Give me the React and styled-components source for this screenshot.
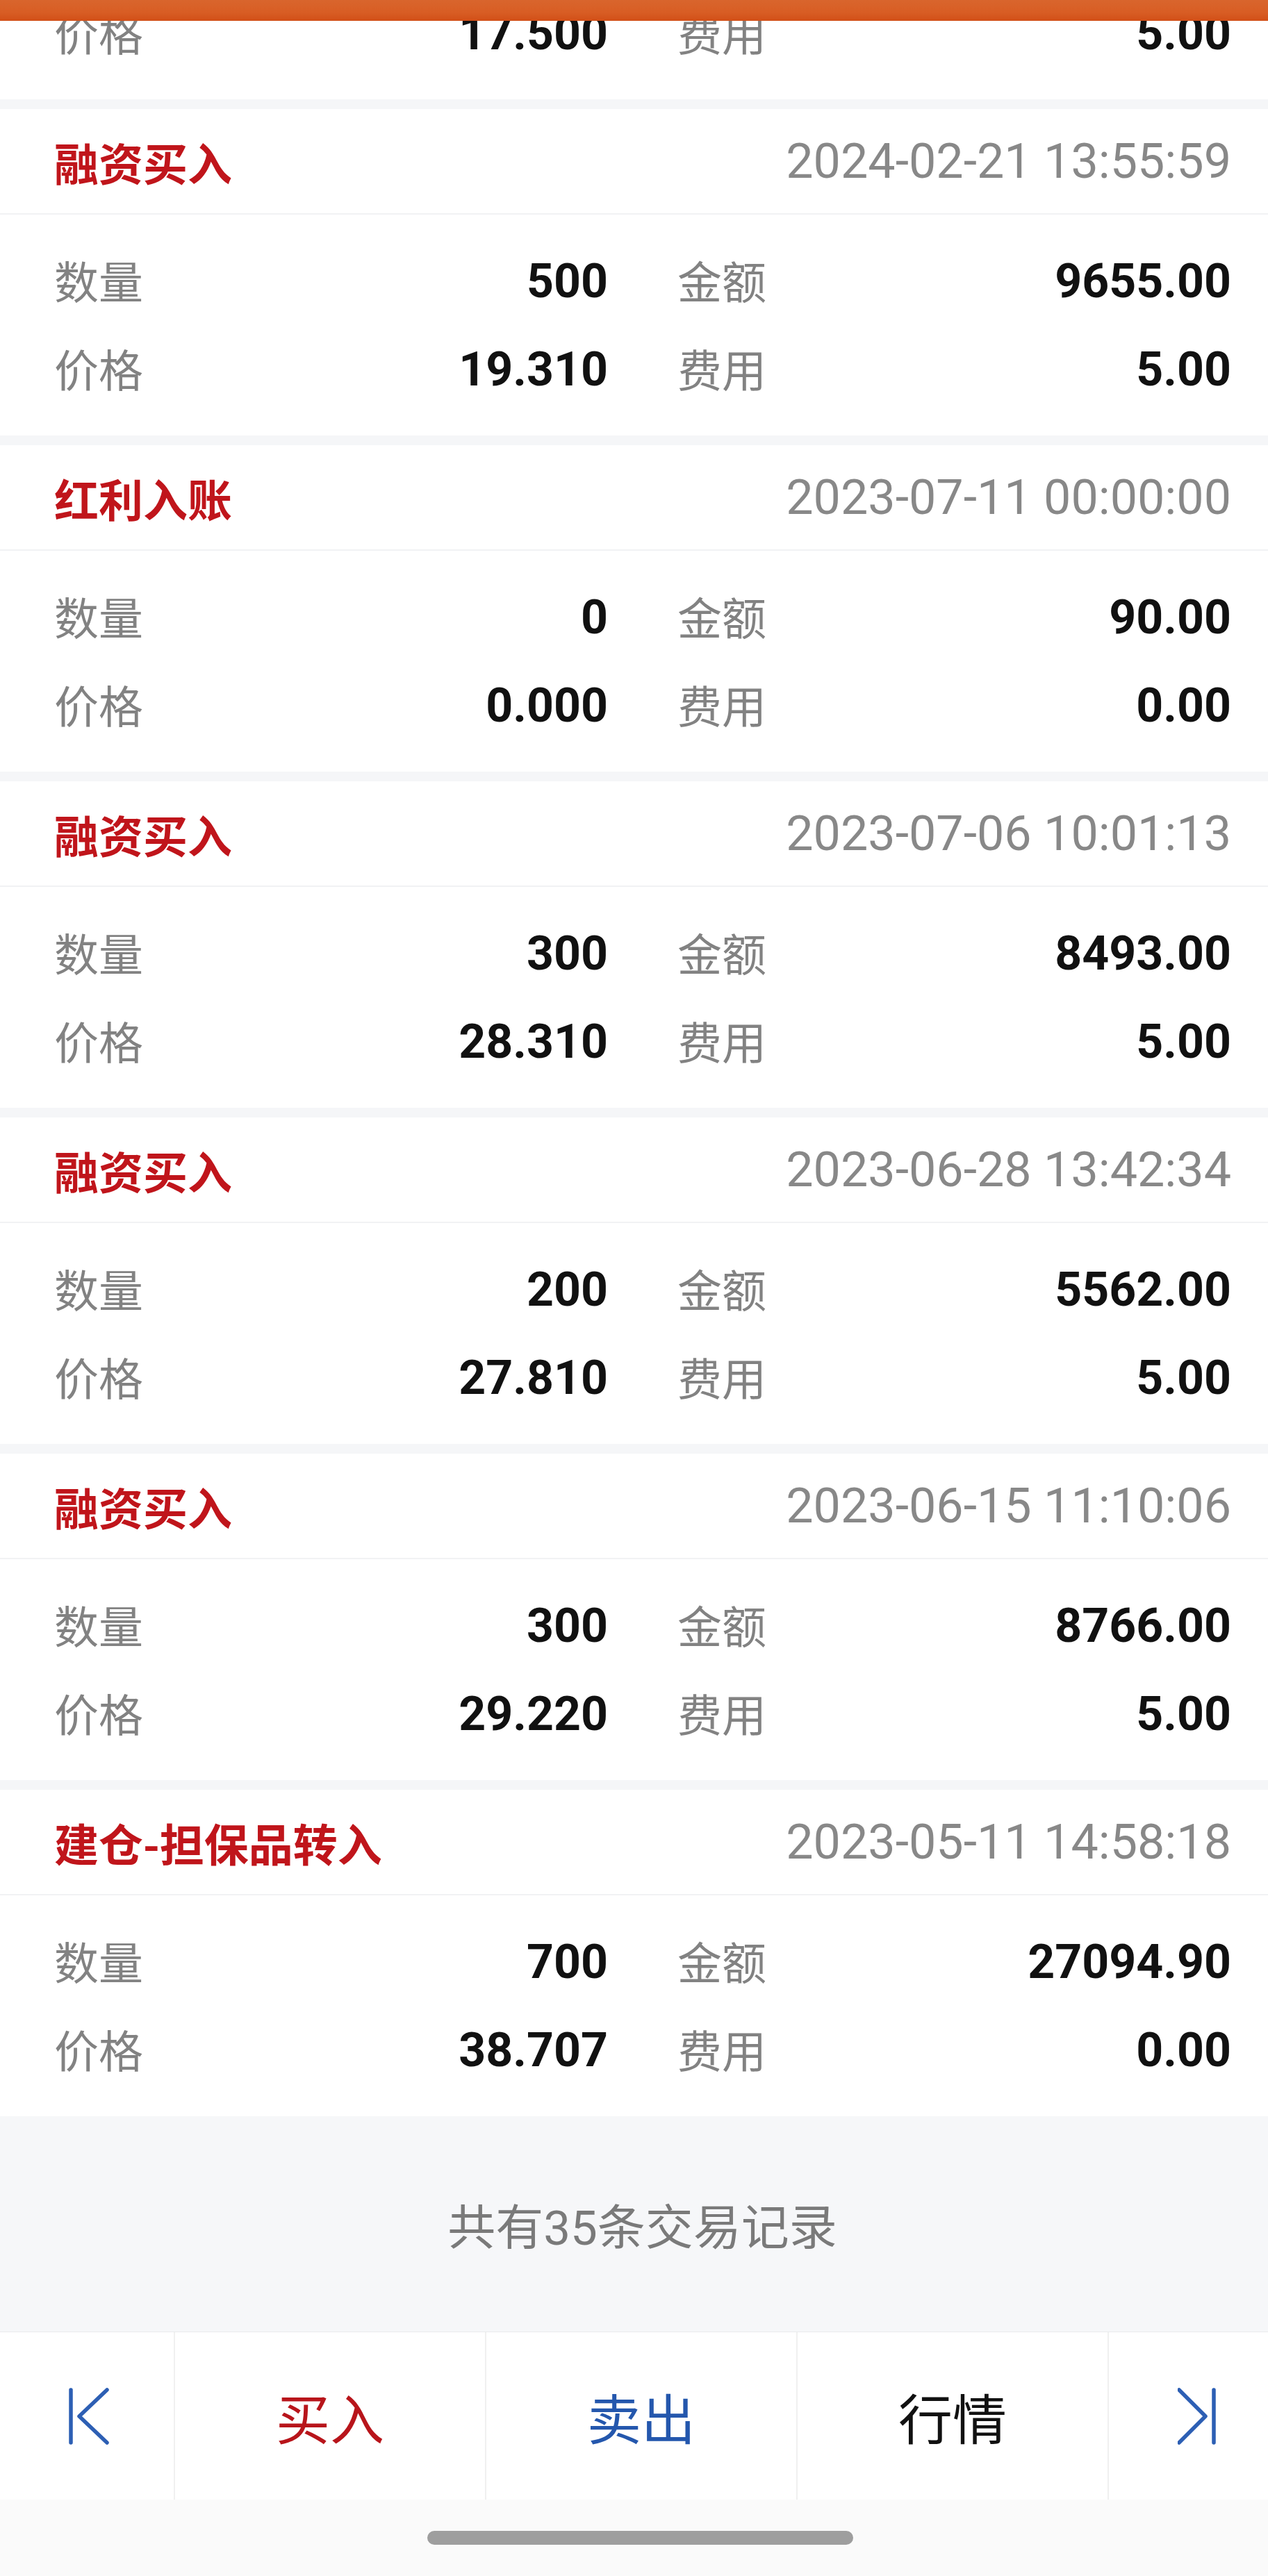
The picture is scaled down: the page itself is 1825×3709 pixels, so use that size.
import React from 'react';
import styled, { createGlobalStyle } from 'styled-components';

const GlobalStyle = createGlobalStyle`
  html, body {
    margin: 0;
    padding: 0;
    background: #ffffff;
    font-family: Roboto, "Noto Sans CJK SC", sans-serif;
  }
  * { box-sizing: border-box; }
`;

const records = [
  { title: '融资买入', time: '2024-02-21 13:55:59', qty: '500', amount: '9655.00', price: '19.310', fee: '5.00' },
  { title: '红利入账', time: '2023-07-11 00:00:00', qty: '0', amount: '90.00', price: '0.000', fee: '0.00' },
  { title: '融资买入', time: '2023-07-06 10:01:13', qty: '300', amount: '8493.00', price: '28.310', fee: '5.00' },
  { title: '融资买入', time: '2023-06-28 13:42:34', qty: '200', amount: '5562.00', price: '27.810', fee: '5.00' },
  { title: '融资买入', time: '2023-06-15 11:10:06', qty: '300', amount: '8766.00', price: '29.220', fee: '5.00' },
  { title: '建仓-担保品转入', time: '2023-05-11 14:58:18', qty: '700', amount: '27094.90', price: '38.707', fee: '0.00' },
];

const Page = styled.div`
  position: relative;
  width: 1825px;
  overflow: hidden;
  background: #f5f6f8;
`;

const TopBar = styled.div`
  position: absolute;
  top: 0;
  left: 0;
  right: 0;
  height: 30px;
  background: linear-gradient(180deg, #d9652d 0%, #d85d24 60%, #d24f17 100%);
  z-index: 2;
`;

const List = styled.div`
  display: flex;
  flex-direction: column;
  gap: 14px;
`;

const Card = styled.div`
  background: #ffffff;
`;

const Header = styled.div`
  height: 152px;
  display: flex;
  align-items: center;
  justify-content: space-between;
  padding: 0 53px 0 78px;
  border-bottom: 2px solid #f1f2f4;
`;

const Title = styled.div`
  font-family: "Noto Sans CJK SC", sans-serif;
  font-weight: 700;
  font-size: 64px;
  line-height: 1;
  color: #c0151b;
`;

const Time = styled.div`
  font-family: Roboto, sans-serif;
  font-size: 70px;
  line-height: 1;
  color: #888888;
`;

const Body = styled.div`
  display: grid;
  grid-template-columns: 1fr 1fr;
  grid-auto-rows: 127px;
  column-gap: 100px;
  padding: 32px 53px 32px 78px;
  margin-top: ${(p) => (p.$tail ? '-16px' : '0')};
  padding-top: ${(p) => (p.$tail ? '0' : '32px')};
`;

const Pair = styled.div`
  display: flex;
  align-items: center;
  justify-content: space-between;
`;

const Label = styled.span`
  font-family: "Noto Sans CJK SC", sans-serif;
  font-size: 64px;
  line-height: 1;
  color: #828282;
  margin-top: -6px;
`;

const Value = styled.span`
  font-family: Roboto, sans-serif;
  font-weight: 700;
  font-size: 68px;
  line-height: 1;
  color: #111111;
`;

const Footer = styled.div`
  height: 310px;
  display: flex;
  align-items: center;
  justify-content: center;
  padding-left: 24px;
  background: #f6f7f9;
  font-family: Roboto, "Noto Sans CJK SC", sans-serif;
  font-size: 69px;
  color: #7a7a7a;
`;

const ActionBar = styled.div`
  display: grid;
  grid-template-columns: 250px repeat(3, 1fr) 231px;
  height: 242px;
  background: #ffffff;
  border-top: 1px solid #e9eaec;
`;

const Cell = styled.div`
  display: flex;
  align-items: center;
  justify-content: ${(p) => (p.$icon ? 'flex-start' : 'center')};
  padding-left: ${(p) => (p.$icon ? '99px' : '0')};
  border-left: ${(p) => (p.$first ? 'none' : '2px solid #f0f0f0')};
  font-family: "Noto Sans CJK SC", sans-serif;
  font-size: 78px;
  color: ${(p) => p.$color || '#111111'};
`;

const HomeArea = styled.div`
  height: 110px;
  display: flex;
  align-items: center;
  justify-content: center;
  padding-left: 18px;
  background: #fafafa;
`;

const Pill = styled.div`
  width: 613px;
  height: 20px;
  border-radius: 10px;
  background: #9e9e9e;
`;

const FirstIcon = () => (
  <svg width="60" height="84" viewBox="0 0 60 84" fill="none" stroke="#2d5fb4" strokeWidth="5.5" strokeLinecap="round" strokeLinejoin="round">
    <line x1="3" y1="4" x2="3" y2="80" />
    <polyline points="55,4 15,42 55,80" />
  </svg>
);

const LastIcon = () => (
  <svg width="60" height="84" viewBox="0 0 60 84" fill="none" stroke="#2d5fb4" strokeWidth="5.5" strokeLinecap="round" strokeLinejoin="round">
    <line x1="52" y1="4" x2="52" y2="80" />
    <polyline points="2,4 40,42 2,80" />
  </svg>
);

const Record = ({ r }) => (
  <Card>
    <Header>
      <Title>{r.title}</Title>
      <Time>{r.time}</Time>
    </Header>
    <Body>
      <Pair><Label>数量</Label><Value>{r.qty}</Value></Pair>
      <Pair><Label>金额</Label><Value>{r.amount}</Value></Pair>
      <Pair><Label>价格</Label><Value>{r.price}</Value></Pair>
      <Pair><Label>费用</Label><Value>{r.fee}</Value></Pair>
    </Body>
  </Card>
);

const App = () => {
  return (
    <Page>
      <GlobalStyle />
      <TopBar />
      <List>
        <Card>
          <Body $tail>
            <Pair><Label>价格</Label><Value>17.500</Value></Pair>
            <Pair><Label>费用</Label><Value>5.00</Value></Pair>
          </Body>
        </Card>
        {records.map((r, i) => <Record key={i} r={r} />)}
      </List>
      <Footer>共有35条交易记录</Footer>
      <ActionBar>
        <Cell $first $icon><FirstIcon /></Cell>
        <Cell $color="#b8151b">买入</Cell>
        <Cell $color="#2457ad">卖出</Cell>
        <Cell $color="#111111">行情</Cell>
        <Cell $icon><LastIcon /></Cell>
      </ActionBar>
      <HomeArea>
        <Pill />
      </HomeArea>
    </Page>
  );
};

export default App;
